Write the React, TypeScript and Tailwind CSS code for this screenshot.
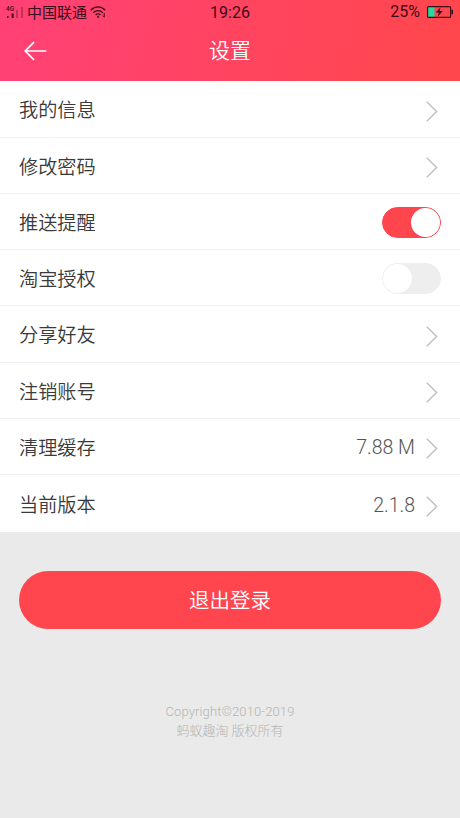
import { useState } from 'react';

interface SettingItem {
  label: string;
  type: 'link' | 'switch';
  value?: string;
  on?: boolean;
}

const items: SettingItem[] = [
  { label: '我的信息', type: 'link' },
  { label: '修改密码', type: 'link' },
  { label: '推送提醒', type: 'switch', on: true },
  { label: '淘宝授权', type: 'switch', on: false },
  { label: '分享好友', type: 'link' },
  { label: '注销账号', type: 'link' },
  { label: '清理缓存', type: 'link', value: '7.88 M' },
  { label: '当前版本', type: 'link', value: '2.1.8' }
];

function StatusBar() {
  return (
    <div className="relative flex h-6 items-center justify-between pl-[6px] pr-[6px] text-[#3a0d18]">
      <div className="flex items-center">
        <svg width="18" height="14" viewBox="0 0 18 14" fill="currentColor">
          <text x="0" y="5.5" fontSize="6.5" fontWeight="500">4G</text>
          <rect x="1" y="11" width="1.5" height="2" />
          <rect x="5.6" y="8.5" width="2" height="4.5" />
          <rect x="10.5" y="5" width="1" height="8" opacity="0.6" />
          <rect x="15.5" y="2" width="1" height="11" opacity="0.6" />
        </svg>
        <span className="ml-[3px] pt-px text-[15px] leading-6">中国联通</span>
        <svg className="ml-[3px]" width="16" height="12" viewBox="0 0 16 12" fill="none" stroke="currentColor" strokeWidth="1.3">
          <path d="M.7 4.2C4.8-.3 11.2-.3 15.3 4.2" />
          <path d="M3.2 6.7c2.7-2.9 6.9-2.9 9.6 0" />
          <path d="M5.6 9c1.4-1.4 3.4-1.4 4.8 0" />
          <circle cx="8" cy="10.8" r="1" fill="currentColor" stroke="none" />
          <path d="M14.2 7v4.2M12.8 9.8l1.4 1.4" strokeWidth="1" />
        </svg>
      </div>
      <span className="absolute left-1/2 top-px -translate-x-1/2 text-[16px] leading-6">19:26</span>
      <div className="flex items-center">
        <span className="text-[16px] leading-6">25%</span>
        <svg className="ml-[7px]" width="27" height="12" viewBox="0 0 27 12">
          <rect x="1" y="1" width="6.5" height="10" fill="#27d8a0" />
          <rect x=".6" y=".6" width="23" height="10.8" rx="1" fill="none" stroke="currentColor" strokeWidth="1.1" />
          <path d="M25.2 3.8v4.4" stroke="currentColor" strokeWidth="1.6" />
          <path d="M13.6 1.2 8.8 6.6h3.1l-1.2 4.2 5-5.8h-3.2z" fill="currentColor" />
        </svg>
      </div>
    </div>
  );
}

function Chevron() {
  return (
    <svg className="mt-[5px]" width="12" height="21" viewBox="0 0 12 21" fill="none" stroke="#bfbfc1" strokeWidth="1.4">
      <path d="M.8.8 10.6 10.5.8 20.2" />
    </svg>
  );
}

function Switch({ initial }: { initial: boolean }) {
  const [on, setOn] = useState(initial);

  return (
    <button
      role="switch"
      aria-checked={on}
      onClick={() => setOn(!on)}
      className={`mt-[2px] flex h-[31px] w-[59px] items-center rounded-full border ${
        on ? 'justify-end border-[#ff464f] bg-[#ff464f]' : 'justify-start border-[#eeeeee] bg-[#eeeeee]'
      }`}
    >
      <span className="size-[29px] rounded-full bg-white" />
    </button>
  );
}

export default function App() {
  return (
    <div className="h-[818px] w-[460px] overflow-hidden bg-[#eaeaea] font-['Roboto','Noto_Sans_CJK_SC',sans-serif]">
      <header className="h-[80.6px] bg-linear-[105deg] from-[#ff4177] to-[#ff474b]">
        <StatusBar />
        <div className="relative flex h-[53px] items-center justify-center text-white">
          <svg className="absolute left-6 top-[17px]" width="23" height="20" viewBox="0 0 23 20" fill="none" stroke="currentColor" strokeWidth="1.7">
            <path d="M22.3 10H1.5M10 1.2 1.3 10l8.7 8.8" />
          </svg>
          <h1 className="pt-[2px] text-[21px] font-[350] leading-none">设置</h1>
        </div>
      </header>

      <ul className="bg-white">
        {items.map((item) => (
          <li
            key={item.label}
            className="flex h-[56.2px] items-center justify-between border-b border-[#f0f0f0] pl-[19px] pr-[19px] first:h-[57.2px] last:h-[57.3px] last:border-0"
          >
            <span className="pt-[5px] text-[19.2px] font-[350] leading-7 text-[#3a3a3a]">{item.label}</span>
            {item.type === 'switch' ? (
              <Switch initial={!!item.on} />
            ) : (
              <div className="flex items-center pr-[3px]">
                {item.value && (
                  <span className="mr-[11px] pt-[4px] text-[19.5px] font-light leading-7 text-[#555]">{item.value}</span>
                )}
                <Chevron />
              </div>
            )}
          </li>
        ))}
      </ul>

      <div className="px-[19px] pt-[38.7px]">
        <button className="h-[58px] w-full rounded-full bg-[#ff464f] pt-[3px] text-[20.5px] font-[350] text-white">
          退出登录
        </button>
      </div>

      <footer className="mt-[73px] text-center text-[13px] font-light leading-[19px] text-[#b4b4b4]">
        <p className="tracking-[0.12px]">Copyright©2010-2019</p>
        <p>蚂蚁趣淘 版权所有</p>
      </footer>
    </div>
  );
}
